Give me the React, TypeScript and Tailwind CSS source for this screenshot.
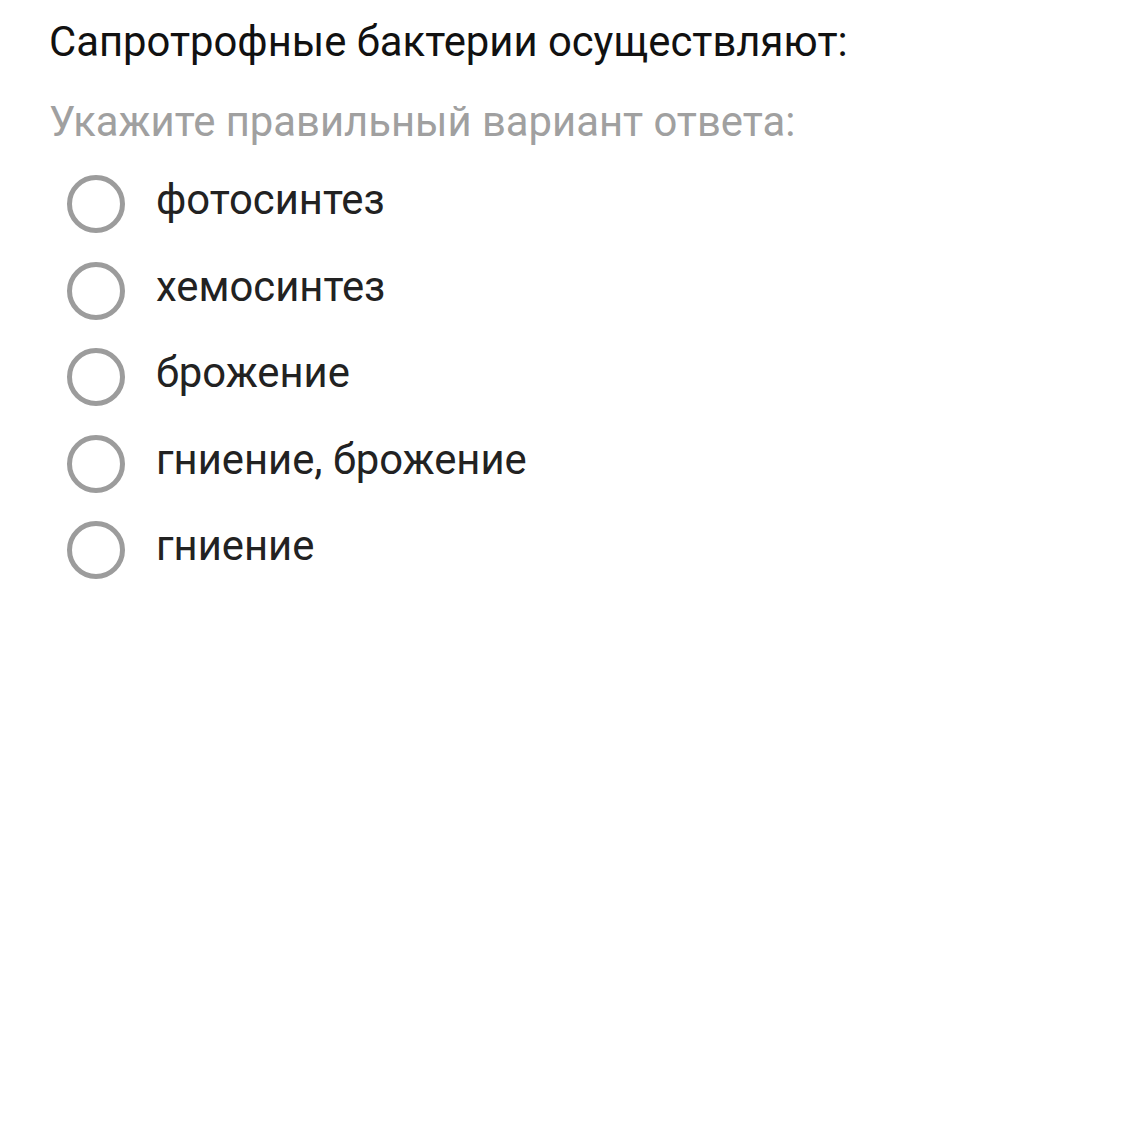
const options = ['фотосинтез', 'хемосинтез', 'брожение', 'гниение, брожение', 'гниение'];

function Radio() {
  return (
    <span className="flex-shrink-0 w-[58px] h-[58px] rounded-full border-[5px] border-[#9c9c9c]" />
  );
}

export default function App() {
  return (
    <div className="w-[1122px] h-[1123px] bg-white font-['Roboto',sans-serif] pt-[14px] pl-[49px]">
      <h1 className="text-[41.8px] leading-[56px] text-[#111111]">Сапротрофные бактерии осуществляют:</h1>
      <p className="mt-[24px] text-[41.8px] leading-[56px] text-[#a0a0a0]">Укажите правильный вариант ответа:</p>
      <div className="mt-[11px] flex flex-col">
        {options.map((o) => (
          <label key={o} className="flex items-center h-[86.5px] pl-[18px]">
            <Radio />
            <span className="ml-[31px] pb-[8px] text-[41.8px] leading-[50px] text-[#222222]">{o}</span>
          </label>
        ))}
      </div>
    </div>
  );
}
